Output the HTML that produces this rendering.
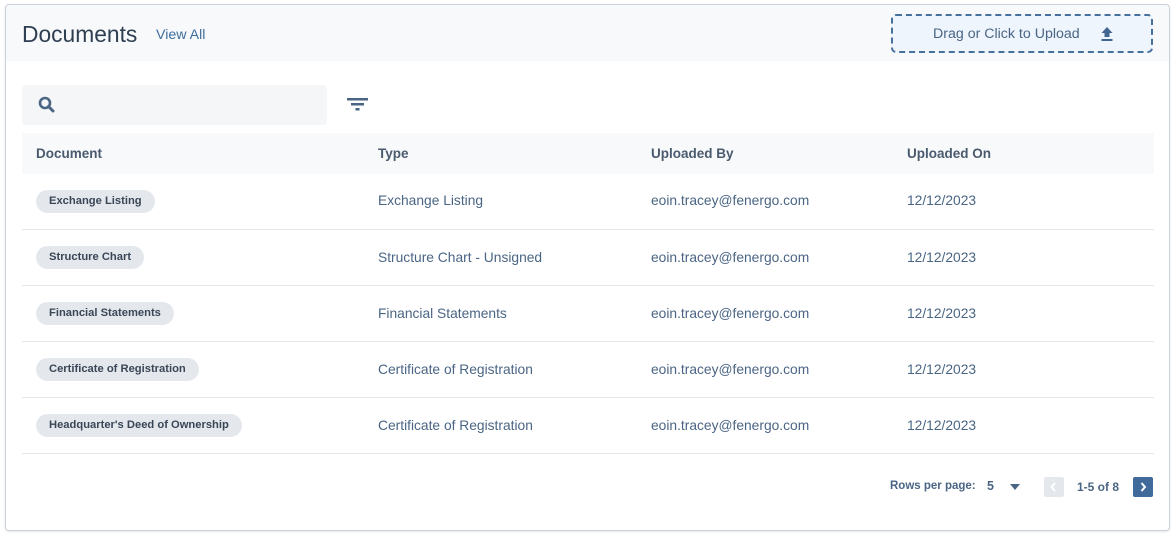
<!DOCTYPE html>
<html><head><style>
*{box-sizing:border-box;margin:0;padding:0}
body{width:1173px;height:535px;background:#fff;font-family:"Liberation Sans",sans-serif;position:relative;overflow:hidden}
.card{position:absolute;left:5px;top:4px;width:1165px;height:527px;border:1px solid #c9d2dc;border-radius:4px;background:#fff;box-shadow:0 1px 2px rgba(0,0,0,.1)}
.hdr{position:absolute;left:0;top:0;width:100%;height:56px;background:#f7f9fb;border-radius:4px 4px 0 0}
.t{position:absolute;left:16px;top:16px;font-size:22.8px;color:#2f3f52}
.va{position:absolute;left:150px;top:22px;font-size:14.2px;color:#3f6d9c}
.up{position:absolute;left:885px;top:9px;width:262px;height:39px;border:2px dashed #47709c;border-radius:5px;background:#eef5fd;color:#4a6584;font-size:14.2px;padding:10px 0 0 40px}
.search{position:absolute;left:16px;top:80px;width:305px;height:40px;background:#f4f6f8;border-radius:4px}
.th{position:absolute;left:16px;top:128px;width:1132px;height:41px;background:#f7f9fb}
.cell{position:absolute;font-size:13.8px;color:#4a6584}
.h{font-weight:bold;color:#4a5a6e;font-size:13.5px}
.chip{position:absolute;left:30px;height:23px;border-radius:12px;background:#e4e8ed;font-size:11.2px;font-weight:bold;color:#3a4656;padding:5px 13px 0 13px}
.line{position:absolute;left:16px;width:1132px;height:1px;background:#e3e7ec}
.pg{position:absolute;font-size:11.5px;color:#4a6584;font-weight:bold}
</style></head><body>
<div class="card">
<div class="hdr"></div>
<div class="t">Documents</div>
<div class="va">View All</div>
<div class="up">Drag or Click to Upload
<svg style="position:absolute;left:207px;top:10px" width="14" height="16" viewBox="0 0 14 16"><path d="M7 1L1.5 7H4.5V11H9.5V7H12.5Z" fill="#3f6590"/><rect x="1.5" y="13" width="11" height="2" fill="#3f6590"/></svg></div>
<div class="search"><svg style="position:absolute;left:16px;top:11px" width="17" height="17" viewBox="0 0 17 17"><circle cx="7" cy="7" r="5" fill="none" stroke="#4a6584" stroke-width="2.6"/><path d="M10.5 10.5L15 15" stroke="#4a6584" stroke-width="3" stroke-linecap="round"/></svg></div>
<svg style="position:absolute;left:341px;top:93px" width="21" height="14" viewBox="0 0 21 14"><rect x="0" y="0" width="21" height="2.5" fill="#4a6584"/><rect x="4" y="5" width="13" height="2.5" fill="#4a6584"/><rect x="8.5" y="10" width="4" height="2.5" fill="#4a6584"/></svg>
<div class="th"></div>
<div class="cell h" style="left:30px;top:141px">Document</div>
<div class="cell h" style="left:372px;top:141px">Type</div>
<div class="cell h" style="left:645px;top:141px">Uploaded By</div>
<div class="cell h" style="left:901px;top:141px">Uploaded On</div>

<div class="chip" style="top:185px">Exchange Listing</div>
<div class="cell" style="left:372px;top:188px">Exchange Listing</div>
<div class="cell" style="left:645px;top:188px">eoin.tracey@fenergo.com</div>
<div class="cell" style="left:901px;top:188px">12/12/2023</div>
<div class="line" style="top:224px"></div>

<div class="chip" style="top:241px">Structure Chart</div>
<div class="cell" style="left:372px;top:245px">Structure Chart - Unsigned</div>
<div class="cell" style="left:645px;top:245px">eoin.tracey@fenergo.com</div>
<div class="cell" style="left:901px;top:245px">12/12/2023</div>
<div class="line" style="top:280px"></div>

<div class="chip" style="top:297px">Financial Statements</div>
<div class="cell" style="left:372px;top:301px">Financial Statements</div>
<div class="cell" style="left:645px;top:301px">eoin.tracey@fenergo.com</div>
<div class="cell" style="left:901px;top:301px">12/12/2023</div>
<div class="line" style="top:336px"></div>

<div class="chip" style="top:353px">Certificate of Registration</div>
<div class="cell" style="left:372px;top:357px">Certificate of Registration</div>
<div class="cell" style="left:645px;top:357px">eoin.tracey@fenergo.com</div>
<div class="cell" style="left:901px;top:357px">12/12/2023</div>
<div class="line" style="top:392px"></div>

<div class="chip" style="top:409px">Headquarter's Deed of Ownership</div>
<div class="cell" style="left:372px;top:413px">Certificate of Registration</div>
<div class="cell" style="left:645px;top:413px">eoin.tracey@fenergo.com</div>
<div class="cell" style="left:901px;top:413px">12/12/2023</div>
<div class="line" style="top:448px"></div>

<div class="pg" style="left:884px;top:475px">Rows per page:</div>
<div class="pg" style="left:981px;top:474px;font-size:12.5px">5</div>
<svg style="position:absolute;left:1004px;top:479px" width="10" height="6"><path d="M0 0H10L5 6Z" fill="#4a6584"/></svg>
<div style="position:absolute;left:1038px;top:472px;width:20px;height:20px;background:#e4e8ed;border-radius:2px"><svg width="20" height="20"><path d="M11 6L7.5 10L11 14" fill="none" stroke="#fff" stroke-width="2"/></svg></div>
<div class="pg" style="left:1071px;top:475px;font-size:12px">1-5 of 8</div>
<div style="position:absolute;left:1127px;top:472px;width:20px;height:20px;background:#3f6a9a;border-radius:2px"><svg width="20" height="20"><path d="M8.5 6L12 10L8.5 14" fill="none" stroke="#fff" stroke-width="2"/></svg></div>
</div>
</body></html>
